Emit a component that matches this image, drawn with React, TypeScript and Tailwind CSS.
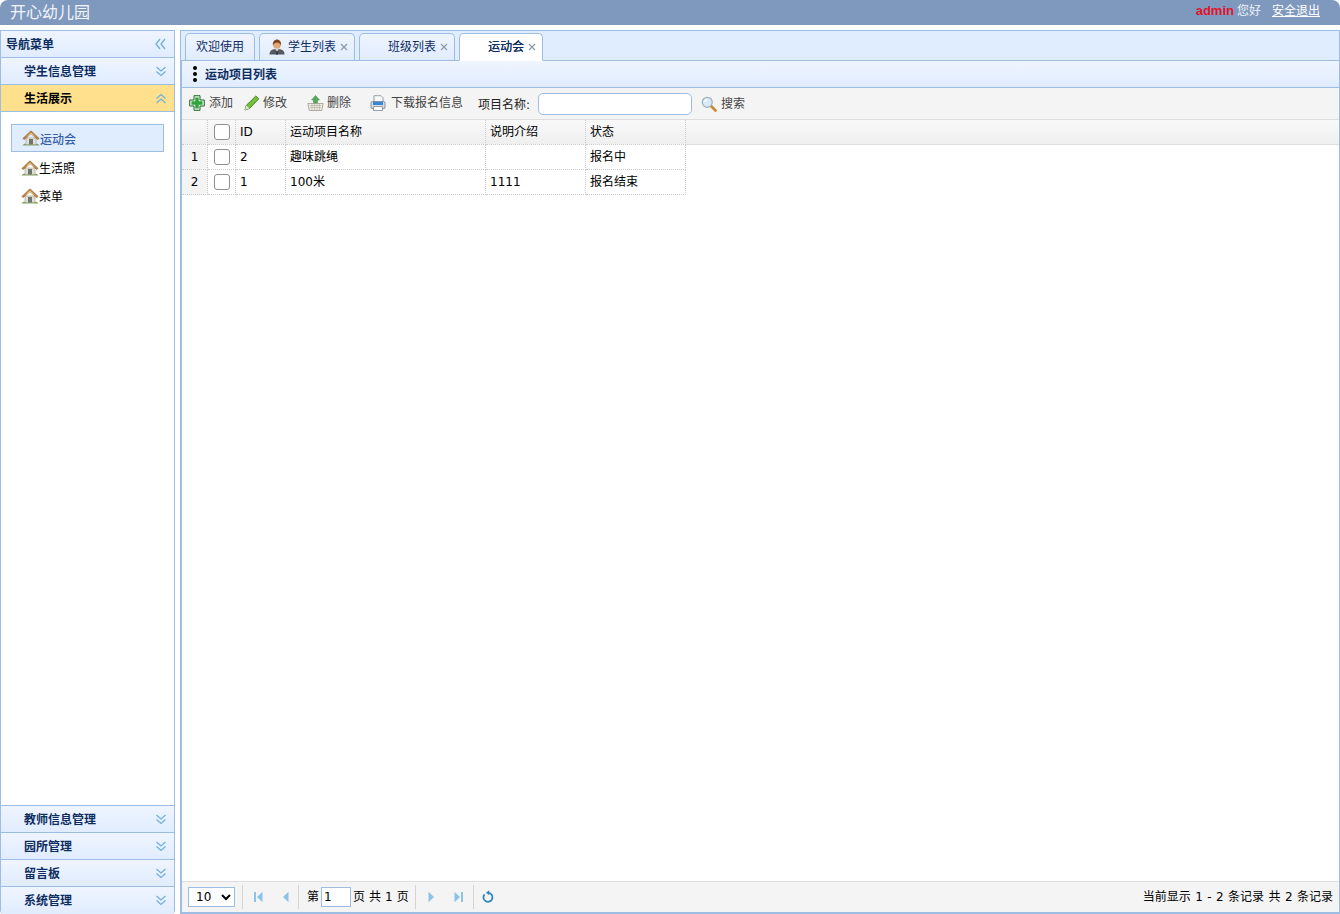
import React from "react";

const House = () => (
  <svg width="18" height="16" viewBox="0 0 18 16" className="shrink-0">
    <path d="M0.500 15.500c1-2 3-2 4-1.500h9c1-.500 3-.500 4 1.500z" fill="#7ba35a" />
    <path d="M4 8h10v6.500H4z" fill="#e3dfd2" stroke="#a89f8c" strokeWidth="0.600" />
    <rect x="7" y="9" width="4" height="5.500" fill="#6c7775" />
    <path d="M0.800 8.500 9 .800l8.200 7.700-1.600 1L9 3.600 2.400 9.500z" fill="#bd8443" stroke="#8f6129" strokeWidth="0.600" />
    <path d="M4 7 9 2.600 14 7 9 4.200z" fill="#ebc18a" />
  </svg>
);

const DoubleChevron = ({ up = false }: { up?: boolean }) => (
  <svg width="12" height="11" viewBox="0 0 12 11" className="shrink-0">
    <g fill="none" stroke="#6fb0dc" strokeWidth="1.300" transform={up ? "matrix(1 0 0 -1 0 11)" : undefined}>
      <path d="M1.500 1 6 5l4.500-4" />
      <path d="M1.500 5.500 6 9.500l4.500-4" />
    </g>
  </svg>
);

const DoubleLeft = () => (
  <svg width="11" height="12" viewBox="0 0 11 12" className="shrink-0">
    <g fill="none" stroke="#6fb0dc" strokeWidth="1.300">
      <path d="M5 1 1 6l4 5" />
      <path d="M10 1 6 6l4 5" />
    </g>
  </svg>
);

const MenuRow = ({ label, active = false, pad = "pt-[2px]" }: { label: string; active?: boolean; pad?: string }) => (
  <div
    className={`h-[27px] shrink-0 flex items-center justify-between pl-[23px] pr-[7px] font-bold border-b border-[#9dbde3] last:border-b-0 ${
      active ? "bg-[#ffe08c] text-[#000000]" : "bg-gradient-to-b from-[#eff5ff] to-[#e0ecff] text-[#0e2d5f]"
    }`}
  >
    <span className={pad}>{label}</span>
    <DoubleChevron up={active} />
  </div>
);

const UserIcon = () => (
  <svg width="16" height="16" viewBox="0 0 16 16" className="shrink-0">
    <path d="M.500 15.500c0-4 2.500-5.500 7.500-5.500s7.500 1.500 7.500 5.500z" fill="#55595f" />
    <path d="M6.300 10 8 12.500 9.700 10z" fill="#e8e4dc" />
    <path d="M7.500 12h1l.500 3.500H7z" fill="#2f3237" />
    <circle cx="8" cy="6" r="3.800" fill="#dfa878" />
    <path d="M3.900 6.500C3.300 2.500 6 .500 8 .500s4.700 2 4.100 6C11 4.200 9.500 3.500 8 3.500S5 4.200 3.900 6.500z" fill="#7d451c" />
  </svg>
);

const Close = () => (
  <svg width="8" height="8" viewBox="0 0 8 8" className="shrink-0">
    <path d="M1 1l6 6M7 1 1 7" stroke="#8c9aa8" strokeWidth="1.200" />
  </svg>
);

const Tab = ({
  label,
  active = false,
  closable = true,
  width,
  pad,
  icon,
}: {
  label: string;
  active?: boolean;
  closable?: boolean;
  width: string;
  pad: string;
  icon?: React.ReactNode;
}) => (
  <div
    className={`${width} ${pad} flex items-center border border-[#9dbde3] rounded-t-[5px] ${
      active
        ? "bg-white border-b-white text-[#0e2d5f] h-[28px] -mb-px relative"
        : "h-[27px] bg-gradient-to-b from-[#eff5ff] to-[#e0ecff] border-b-0 text-[#0e2d5f]"
    }`}
  >
    {icon}
    <span className={active ? "[text-shadow:0.3px_0_0_#0e2d5f]" : ""}>{label}</span>
    {closable && (
      <span className="ml-[4px] flex items-center">
        <Close />
      </span>
    )}
  </div>
);

const AddIcon = () => (
  <svg width="16" height="16" viewBox="0 0 16 16" className="shrink-0">
    <path
      d="M5 .700h6v4.300h4.300v6H11v4.300H5V11H.700V5H5z"
      fill="#e6f4e6"
      stroke="#1f6b2a"
      strokeWidth="1"
      strokeLinejoin="round"
    />
    <path d="M6.300 2.500h3.400v3.800h3.800v3.400H9.700v3.800H6.300V9.700H2.500V6.300h3.800z" fill="#2fa53c" />
  </svg>
);

const PencilIcon = () => (
  <svg width="16" height="16" viewBox="0 0 16 16" className="shrink-0">
    <path d="M1 15 2.200 10.500 11.800 1l3 2.800L5.500 13.500z" fill="#74bf3c" stroke="#3f7d22" strokeWidth="0.900" strokeLinejoin="round" />
    <path d="M1 15 2.200 10.500 5.500 13.500z" fill="#dbe9c4" />
  </svg>
);

const DeleteIcon = () => (
  <svg width="17" height="16" viewBox="0 0 17 16" className="shrink-0">
    <path d="M8.500 .500 12.500 5H10.500v3.500h-4V5h-2z" fill="#56a85f" stroke="#3f8047" strokeWidth="0.500" />
    <path d="M.800 8.500h15.400l-1.500 7h-12.400z" fill="#efeee6" stroke="#9d9a8c" strokeWidth="0.800" />
    <path d="M2.500 10.500h12M3 12.500h11M5 9v6.500M7.500 9v6.500M10 9v6.500M12.500 9v6.500" stroke="#b0ad9f" strokeWidth="0.600" />
  </svg>
);

const PrinterIcon = () => (
  <svg width="16" height="16" viewBox="0 0 16 16" className="shrink-0">
    <path d="M4 .700h7l2 2v5.800H4z" fill="#f6f8fa" stroke="#7f8a99" strokeWidth="0.800" />
    <path d="M1 8c0-1 .500-1.500 1.500-1.500h11c1 0 1.500.500 1.500 1.500v4.500c0 .500-.300 1-1 1H2c-.700 0-1-.500-1-1z" fill="#d7dde5" stroke="#6f7a8a" strokeWidth="0.800" />
    <rect x="3" y="7" width="10" height="3" fill="#3a86d6" />
    <path d="M3.500 11.500h9v4h-9z" fill="#fff" stroke="#7f8a99" strokeWidth="0.800" />
  </svg>
);

const SearchIcon = () => (
  <svg width="16" height="16" viewBox="0 0 16 16" className="shrink-0">
    <path d="m9.500 9.500 5 5" stroke="#c88a2c" strokeWidth="2.600" strokeLinecap="round" />
    <circle cx="6.300" cy="6.300" r="5" fill="#d7e9f5" stroke="#9db0bf" strokeWidth="1.200" />
    <path d="M3.500 6c.300-1.500 1.300-2.500 2.800-2.700" stroke="#fff" strokeWidth="1.200" fill="none" />
  </svg>
);

const ToolButton = ({ icon, label, className = "" }: { icon: React.ReactNode; label: string; className?: string }) => (
  <div className={`flex items-center text-[#444444] ${className}`}>
    {icon}
    <span>{label}</span>
  </div>
);

const Check = () => (
  <input
    type="checkbox"
    readOnly
    className="appearance-none block w-[16px] h-[16px] bg-white border border-[#8f8f8f] rounded-[3px]"
  />
);

const cell = "shrink-0 h-full flex items-center px-[4px] border-r border-dotted border-[#cccccc]";

const Row = ({ n, id, name, desc, status }: { n: string; id: string; name: string; desc: string; status: string }) => (
  <div className="flex h-[25px] items-stretch">
    <div className="w-[26px] shrink-0 flex items-center justify-center bg-[#f4f4f4] border-r border-b border-dotted border-[#cccccc]">
      {n}
    </div>
    <div className={`${cell} w-[28px] justify-center border-b`}>
      <Check />
    </div>
    <div className={`${cell} w-[50px] border-b`}>{id}</div>
    <div className={`${cell} w-[200px] border-b`}>{name}</div>
    <div className={`${cell} w-[100px] border-b`}>{desc}</div>
    <div className={`${cell} w-[100px] border-b`}>{status}</div>
  </div>
);

const PagerSep = () => <div className="w-px h-[24px] bg-[#d4d4d4] shrink-0" />;

const PagerArrow = ({ dir, bar = false, color = "#8cc4e8" }: { dir: "l" | "r"; bar?: boolean; color?: string }) => (
  <svg width="12" height="12" viewBox="0 0 12 12" className="shrink-0">
    {dir === "l" ? (
      <>
        {bar && <rect x="1" y="1" width="2" height="10" fill={color} />}
        <path d="M9.500 .800v10.400L4 6z" fill={color} />
      </>
    ) : (
      <>
        {bar && <rect x="9" y="1" width="2" height="10" fill={color} />}
        <path d="M2.500 .800v10.400L8 6z" fill={color} />
      </>
    )}
  </svg>
);

const Refresh = () => (
  <svg width="14" height="14" viewBox="0 0 14 14" className="shrink-0">
    <path d="M3.600 4.300A4.500 4.500 0 1 0 7 2.800" fill="none" stroke="#2f86bf" strokeWidth="1.800" />
    <path d="M8.200 .300v5L5 2.800z" fill="#2f86bf" />
  </svg>
);

const headCell = "shrink-0 flex items-center px-[4px] bg-gradient-to-b from-[#f9f9f9] to-[#efefef] border-r border-b border-dotted border-[#cccccc]";

export default function App() {
  return (
    <div className="w-[1340px] h-[914px] flex flex-col overflow-hidden bg-white text-[12px] leading-none text-black font-['DejaVu_Sans','Noto_Sans_CJK_SC',sans-serif]">
      <header className="h-[25px] shrink-0 bg-[#7f99be] rounded-t-[8px] flex items-start justify-between pl-[10px] pr-[20px] text-white">
        <div className="text-[16px] leading-[22px] text-[#f2f5fa] font-['Noto_Sans_CJK_SC',sans-serif]">开心幼儿园</div>
        <div className="flex items-center mt-[4px]">
          <span className="text-[#e0142a] font-bold text-[13px] font-['Liberation_Sans',sans-serif] -ml-[1px]">admin</span>
          <span className="ml-[3px] text-[#eef2f8]">您好</span>
          <span className="ml-[11px] underline">安全退出</span>
        </div>
      </header>

      <div className="flex-1 min-h-0 flex gap-[5px] pt-[5px]">
        <aside className="w-[175px] shrink-0 flex flex-col border border-[#9dbde3] border-b-0 rounded-b-[4px] overflow-hidden">
          <div className="h-[27px] shrink-0 flex items-center justify-between pl-[5px] pr-[8px] font-bold text-[#0e2d5f] bg-gradient-to-b from-[#eff5ff] to-[#e0ecff] border-b border-[#9dbde3]">
            <span className="pt-[2px]">导航菜单</span>
            <DoubleLeft />
          </div>
          <MenuRow label="学生信息管理" />
          <MenuRow label="生活展示" active />
          <div className="flex-1 min-h-0 bg-white border-b border-[#9dbde3] pt-[12px] pl-[10px] pr-[10px]">
            <div className="h-[28px] flex items-center pl-[10px] bg-[#e0ecff] border border-[#9dbde3] text-[#3560a8] font-medium">
              <House />
              <span className="pt-[3px]">运动会</span>
            </div>
            <div className="h-[29px] flex items-center pl-[10px] mt-[1px]">
              <House />
              <span className="pt-[2px]">生活照</span>
            </div>
            <div className="h-[28px] flex items-center pl-[10px]">
              <House />
              <span className="pt-[2px]">菜单</span>
            </div>
          </div>
          <MenuRow label="教师信息管理" pad="pt-[2px]" />
          <MenuRow label="园所管理" />
          <MenuRow label="留言板" />
          <MenuRow label="系统管理" pad="pt-0" />
        </aside>

        <main className="flex-1 min-w-0 flex flex-col">
          <div className="h-[30px] shrink-0 flex items-end gap-[4px] pl-[4px] bg-[#e0ecff] border border-[#9dbde3] border-b-0">
            <Tab label="欢迎使用" closable={false} width="w-[70px]" pad="pl-[10px]" />
            <Tab label="学生列表" width="w-[96px]" pad="pl-[9px]" icon={<span className="mr-[3px]"><UserIcon /></span>} />
            <Tab label="班级列表" width="w-[96px]" pad="pl-[28px]" />
            <Tab label="运动会" active width="w-[84px]" pad="pl-[28px]" />
          </div>

          <section className="flex-1 min-h-0 flex flex-col border-2 border-t-[1px] border-[#9dbde3] border-r-[1px]">
            <div className="h-[27px] shrink-0 flex items-center pl-[10px] font-bold text-[#0e2d5f] bg-gradient-to-b from-[#eff5ff] to-[#e0ecff] border-b border-[#9dbde3]">
              <span className="w-[5px] flex flex-col gap-[2px] items-center mr-[8px]">
                <span className="w-[4px] h-[4px] rounded-full bg-black" />
                <span className="w-[4px] h-[4px] rounded-full bg-black" />
                <span className="w-[4px] h-[4px] rounded-full bg-black" />
              </span>
              <span className="pt-[2px]">运动项目列表</span>
            </div>

            <div className="h-[32px] shrink-0 flex items-center pl-[7px] bg-[#f4f4f4] border-b border-[#dddddd]">
              <div className="flex items-center pb-[2px]">
                <ToolButton icon={<AddIcon />} label="添加" className="gap-[4px]" />
                <ToolButton icon={<PencilIcon />} label="修改" className="ml-[11px] gap-[3px]" />
                <ToolButton icon={<DeleteIcon />} label="删除" className="ml-[20px] gap-[3px]" />
                <ToolButton icon={<PrinterIcon />} label="下载报名信息" className="ml-[19px] gap-[5px]" />
              </div>
              <span className="ml-[15px] pt-[2px] text-[#222222]">项目名称:</span>
              <input
                readOnly
                className="ml-[8px] mt-[1px] w-[154px] h-[22px] bg-white border border-[#9dbde3] rounded-[5px]"
              />
              <ToolButton icon={<SearchIcon />} label="搜索" className="ml-[9px] mt-[1px] gap-[4px]" />
            </div>

            <div className="flex-1 min-h-0 bg-white">
              <div className="flex h-[25px] items-stretch">
                <div className={`${headCell} w-[26px]`} />
                <div className={`${headCell} w-[28px] justify-center`}>
                  <Check />
                </div>
                <div className={`${headCell} w-[50px]`}>ID</div>
                <div className={`${headCell} w-[200px]`}>运动项目名称</div>
                <div className={`${headCell} w-[100px]`}>说明介绍</div>
                <div className={`${headCell} w-[100px]`}>状态</div>
                <div className="flex-1 bg-gradient-to-b from-[#f9f9f9] to-[#efefef] border-b border-[#dddddd]" />
              </div>
              <Row n="1" id="2" name="趣味跳绳" desc="" status="报名中" />
              <Row n="2" id="1" name="100米" desc="1111" status="报名结束" />
            </div>

            <div className="h-[31px] shrink-0 flex items-center pl-[6px] pr-[6px] bg-[#f4f4f4] border-t border-[#dddddd]">
              <select className="w-[47px] h-[20px] bg-white border border-[#9dbde3] pl-[3px] text-[12px]">
                <option>10</option>
              </select>
              <div className="ml-[7px]"><PagerSep /></div>
              <div className="ml-[10px]"><PagerArrow dir="l" bar /></div>
              <div className="ml-[14px]"><PagerArrow dir="l" /></div>
              <div className="ml-[7px]"><PagerSep /></div>
              <span className="ml-[8px]">第</span>
              <input readOnly value="1" className="ml-[2px] w-[30px] h-[20px] bg-white border border-[#9dbde3] pl-[2px] text-[12px]" />
              <span className="ml-[2px] [word-spacing:0.2px]">页 共 1 页</span>
              <div className="ml-[6px]"><PagerSep /></div>
              <div className="ml-[10px]"><PagerArrow dir="r" /></div>
              <div className="ml-[14px]"><PagerArrow dir="r" bar /></div>
              <div className="ml-[9px]"><PagerSep /></div>
              <div className="ml-[7px]"><Refresh /></div>
              <span className="ml-auto [word-spacing:0.6px]">当前显示 1 - 2 条记录 共 2 条记录</span>
            </div>
          </section>
        </main>
      </div>
    </div>
  );
}
